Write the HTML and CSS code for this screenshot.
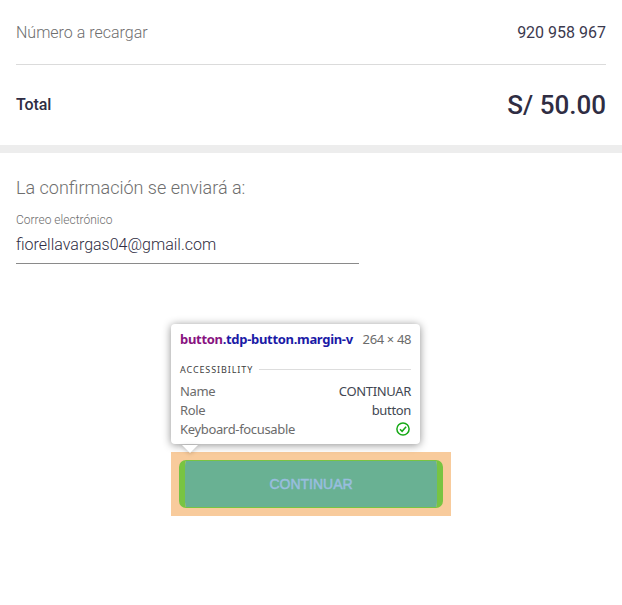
FILE: index.html
```html
<!DOCTYPE html>
<html lang="es">
<head>
<meta charset="utf-8">
<title>Recarga</title>
<link rel="stylesheet" href="styles.css">
</head>
<body>
<section class="summary">
  <div class="row row-number"><span class="label">Número a recargar</span><span class="number">920 958 967</span></div>
  <div class="row row-total"><span class="total">Total</span><span class="amount">S/ 50.00</span></div>
</section>
<section class="confirm">
  <h2 class="heading">La confirmación se enviará a:</h2>
  <div class="field">
    <div class="field-label">Correo electrónico</div>
    <div class="field-value">fiorellavargas04@gmail.com</div>
  </div>
</section>
<div class="highlight">
  <button class="continue" type="button"><span>CONTINUAR</span></button>
  <div class="tooltip">
    <div class="tip-head"><span class="selector"><span class="tag">button</span>.tdp-button.margin-v</span><span class="size">264 × 48</span></div>
    <div class="tip-section"><span>ACCESSIBILITY</span><i class="rule"></i></div>
    <div class="tip-row"><span>Name</span><span class="value">CONTINUAR</span></div>
    <div class="tip-row"><span>Role</span><span class="value">button</span></div>
    <div class="tip-row"><span>Keyboard-focusable</span>
      <svg class="check" viewBox="0 0 16 16" width="16" height="16"><circle cx="8" cy="8" r="6.1" /><path d="M5 8.2l2.1 2.1 4-4.6"/></svg>
    </div>
    <svg class="arrow" viewBox="0 0 16 8" width="16" height="8"><path d="M0 0h16L8 8z"/></svg>
  </div>
</div>
</body>
</html>
```
FILE: styles.css
```css
* { box-sizing: border-box; }
body { margin: 0; background: #fff; color: #2f2d43; font: 400 16px/24px Roboto, sans-serif; }
.summary { height: 153px; padding: 0 16px; border-bottom: 8px solid #ededed; }
.row { display: flex; justify-content: space-between; align-items: center; }
.row-number { height: 65px; padding-top: 2px; border-bottom: 1px solid #dbdbdb; }
.row-total { height: 80px; }
.label { font-weight: 300; color: #6e6e6e; }
.number { color: #3b394e; }
.total { font-weight: 500; letter-spacing: -.1px; }
.amount { font-size: 26px; font-weight: 500; }
.confirm { height: 299px; padding: 23px 16px 0; }
.heading { margin: 0; font-size: 18px; line-height: 24px; font-weight: 300; color: #6e6e6e; }
.field { width: 343px; height: 64px; border-bottom: 1px solid #8a8a8a; padding-top: 12px; }
.field-label { font-size: 12px; line-height: 16px; font-weight: 300; color: #6e6e6e; }
.field-value { font-weight: 300; line-height: 24px; padding-top: 5px; }
.highlight { position: relative; width: 280px; height: 64px; margin-left: 171px; padding: 8px; background: #f8cb9c; }
.continue { display: block; width: 264px; height: 48px; padding: 0; border: solid #78c442; border-width: 1px 6px; border-radius: 7px; background: #69b193 padding-box; color: #99bedf; font: 400 14px/46px "Liberation Sans", Arial, sans-serif; -webkit-text-stroke: .5px #99bedf; }
.tooltip { position: absolute; left: 0; top: -128px; width: 249px; height: 120px; padding: 6px 9px 0; border-radius: 4px; background: #fff; box-shadow: 0 1px 9px rgba(0,0,0,.45); font: 400 13px/19px "Noto Sans", sans-serif; color: #6b6b6b; letter-spacing: -.34px; }
.tip-head { display: flex; justify-content: space-between; height: 19px; white-space: nowrap; }
.selector { font-weight: 700; color: #1a1aa6; letter-spacing: -.31px; }
.tag { color: #881280; }
.size { margin-right: -.1px; letter-spacing: -.36px; }
.tip-section { display: flex; align-items: center; gap: 6px; height: 33px; padding-top: 8px; font-size: 9px; letter-spacing: .9px; color: #404040; }
.rule { flex: 1; height: 1px; background: #ddd; }
.tip-row { display: flex; justify-content: space-between; align-items: center; height: 19px; }
.value { color: #424752; }
.check { position: relative; top: -1px; fill: none; stroke: #16a916; stroke-width: 1.5; }
.arrow { position: absolute; left: 11px; top: 121px; fill: #fff; filter: drop-shadow(0 1px 2px rgba(0,0,0,.2)); }
```
